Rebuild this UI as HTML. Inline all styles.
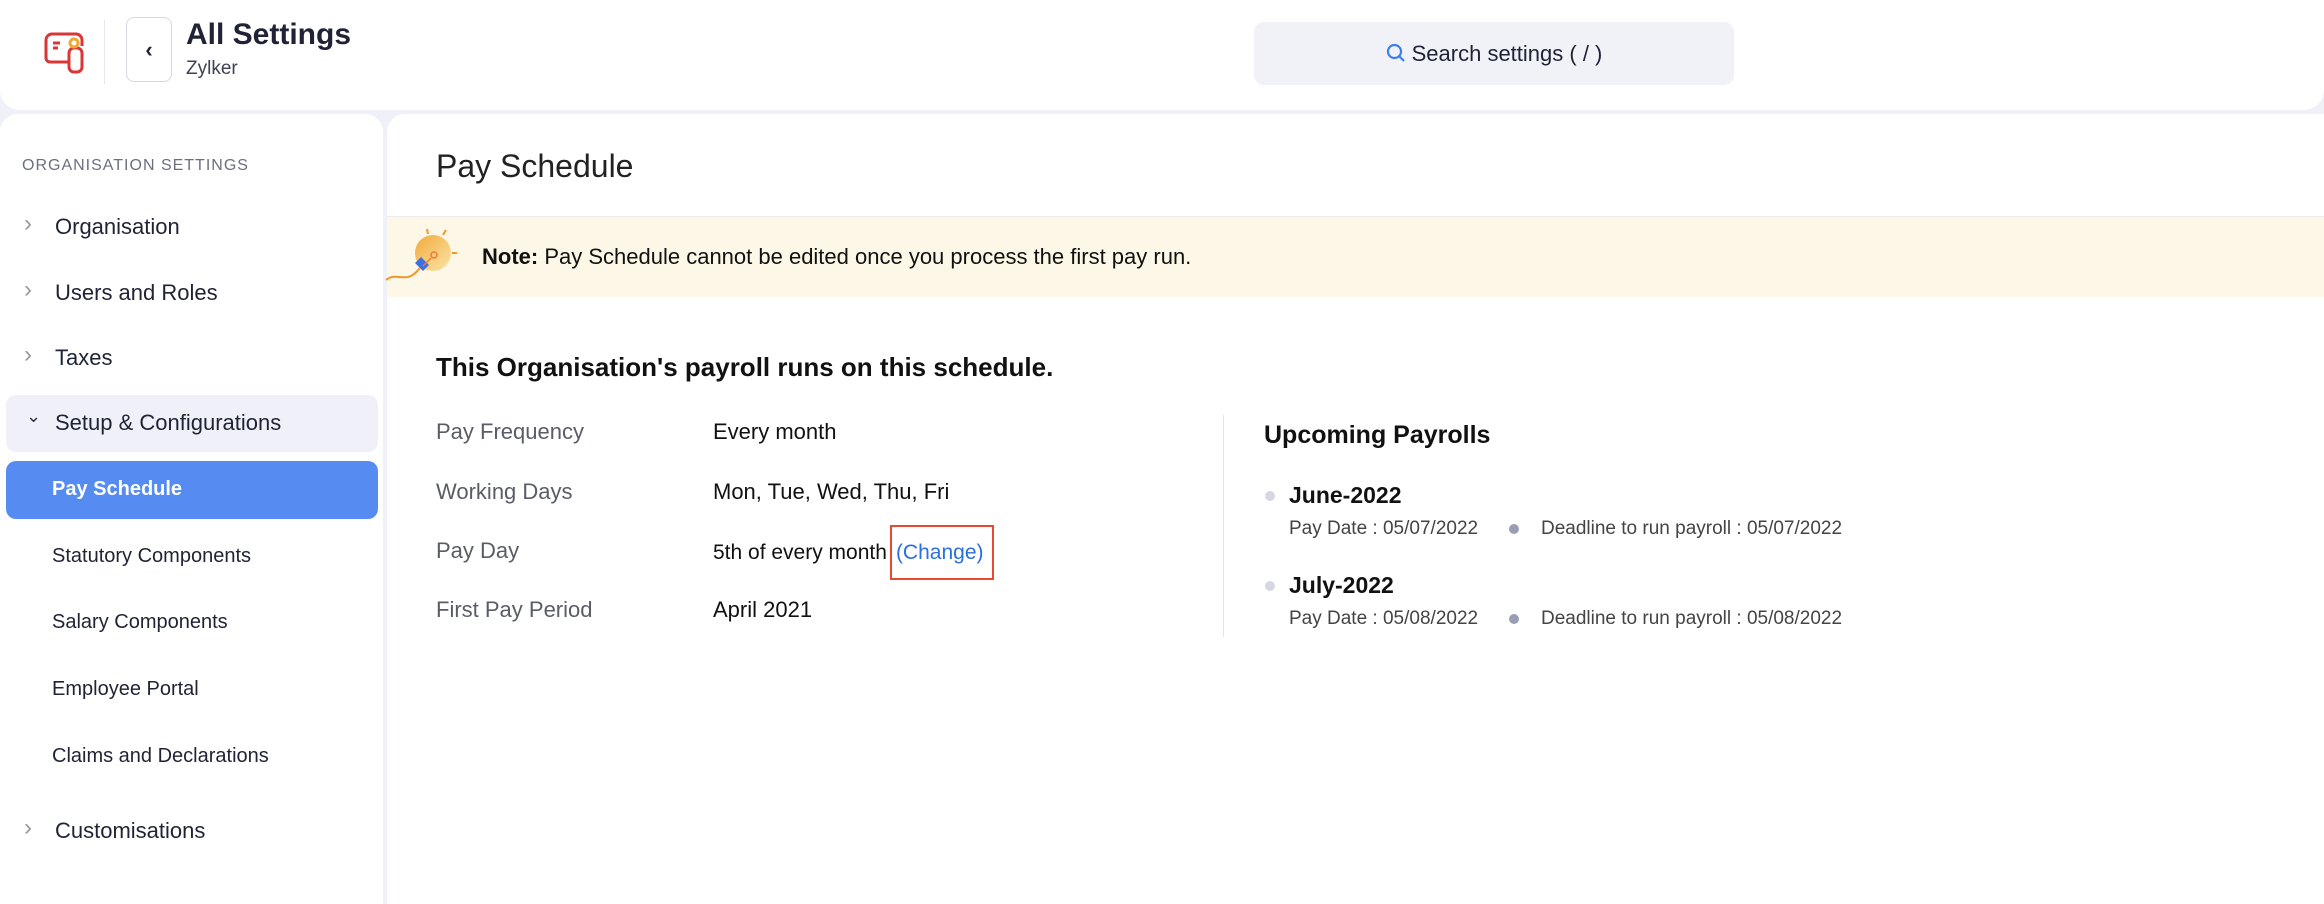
<!DOCTYPE html>
<html><head><meta charset="utf-8"><style>
*{margin:0;padding:0;box-sizing:border-box}
body{width:2324px;height:890px;background:#f0f0f8;font-family:"Liberation Sans",sans-serif;position:relative;overflow:hidden;color:#1f2335}
.a{position:absolute;white-space:nowrap}
.hdr{left:0;top:0;width:2324px;height:110px;background:#fff;border-radius:0 0 20px 20px}
.side{left:0;top:114px;width:383px;height:790px;background:#fff;border-radius:18px 18px 0 0}
.main{left:387px;top:114px;width:1950px;height:790px;background:#fff;border-radius:18px 0 0 0}
.si{font-size:22px;color:#1f2335;left:55px}
.sub{font-size:20px;color:#1f2335;left:52px}
.chev{left:24px;color:#999;font-size:24px}
.lbl{left:436px;font-size:22px;color:#5a5d66}
.val{left:713px;font-size:22px;color:#111}
</style></head><body>
<div class="a hdr"></div>
<svg class="a" style="left:44px;top:32px" width="44" height="42" viewBox="0 0 44 42"><path d="M8 2h24a6 6 0 0 1 6 6v6M2 8a6 6 0 0 1 6-6M2 8v18a4 4 0 0 0 4 4h18" fill="none" stroke="#d93636" stroke-width="3"/><rect x="25" y="16" width="13" height="24" rx="5" fill="none" stroke="#d93636" stroke-width="3"/><path d="M9 11h7M9 16h5" stroke="#d93636" stroke-width="3"/><circle cx="30" cy="11" r="4" fill="none" stroke="#f0a830" stroke-width="3"/></svg>
<div class="a" style="left:104px;top:20px;width:1px;height:64px;background:#e6e6ee"></div>
<div class="a" style="left:126px;top:17px;width:46px;height:65px;border:1px solid #d8d8e2;border-radius:8px;text-align:center;line-height:63px;font-size:22px;font-weight:bold">‹</div>
<div class="a" style="left:186px;top:18px;font-size:30px;font-weight:bold;color:#1f2335">All Settings</div>
<div class="a" style="left:186px;top:58px;font-size:19px;color:#3e4256">Zylker</div>
<div class="a" style="left:1254px;top:22px;width:480px;height:63px;background:#f1f2f8;border-radius:10px;text-align:center;line-height:63px;font-size:22px;color:#1f2335"><svg width="20" height="20" viewBox="0 0 20 20" style="vertical-align:-2px;margin-right:6px"><circle cx="8.5" cy="8.5" r="6.5" fill="none" stroke="#3c7ff0" stroke-width="2.2"/><path d="M13.5 13.5L18 18" stroke="#3c7ff0" stroke-width="2.2"/></svg>Search settings ( / )</div>

<div class="a side"></div>
<div class="a main"></div>
<div class="a" style="left:22px;top:157px;font-size:16px;color:#6b6f80;letter-spacing:1px">ORGANISATION SETTINGS</div>
<div class="a chev" style="top:210px">›</div><div class="a si" style="top:214px">Organisation</div>
<div class="a chev" style="top:276px">›</div><div class="a si" style="top:280px">Users and Roles</div>
<div class="a chev" style="top:341px">›</div><div class="a si" style="top:345px">Taxes</div>
<div class="a" style="left:6px;top:395px;width:372px;height:57px;background:#f0f0f8;border-radius:10px"></div>
<div class="a" style="left:26px;top:406px;font-size:18px;color:#333">⌄</div>
<div class="a si" style="top:410px">Setup &amp; Configurations</div>
<div class="a" style="left:6px;top:461px;width:372px;height:58px;background:#568bf2;border-radius:10px"></div>
<div class="a sub" style="top:478px;color:#fff;font-weight:bold">Pay Schedule</div>
<div class="a sub" style="top:545px">Statutory Components</div>
<div class="a sub" style="top:611px">Salary Components</div>
<div class="a sub" style="top:678px">Employee Portal</div>
<div class="a sub" style="top:745px">Claims and Declarations</div>
<div class="a chev" style="top:814px">›</div><div class="a si" style="top:818px">Customisations</div>

<div class="a" style="left:436px;top:148px;font-size:32px;color:#222">Pay Schedule</div>
<div class="a" style="left:387px;top:216px;width:1937px;height:1px;background:#ececf2"></div>
<div class="a" style="left:387px;top:217px;width:1937px;height:80px;background:#fdf7e7"></div>
<svg class="a" style="left:385px;top:225px" width="80" height="62" viewBox="0 0 80 62"><defs><linearGradient id="g" x1="0" y1="0" x2="1" y2="1"><stop offset="0" stop-color="#f2a93a"/><stop offset="1" stop-color="#fbe6a8"/></linearGradient></defs><circle cx="48" cy="28" r="18" fill="url(#g)"/><path d="M30 38l8 8 6-6-8-8z" fill="#3c6fe0"/><path d="M1 55c10-8 18 2 28-6 3-2 4-4 6-6" fill="none" stroke="#f0962e" stroke-width="2"/><circle cx="49" cy="30" r="3" fill="none" stroke="#f07a3c" stroke-width="1.5"/><path d="M46 33l-8 8" stroke="#f07a3c" stroke-width="1.5"/><path d="M42 4l1 5M58 10l3-5M67 28h5" stroke="#f0962e" stroke-width="2"/></svg>
<div class="a" style="left:482px;top:244px;font-size:22px;color:#111"><b>Note:</b> Pay Schedule cannot be edited once you process the first pay run.</div>

<div class="a" style="left:436px;top:352px;font-size:26px;font-weight:bold;color:#111">This Organisation's payroll runs on this schedule.</div>
<div class="a lbl" style="top:419px">Pay Frequency</div><div class="a val" style="top:419px">Every month</div>
<div class="a lbl" style="top:479px">Working Days</div><div class="a val" style="top:479px">Mon, Tue, Wed, Thu, Fri</div>
<div class="a lbl" style="top:538px">Pay Day</div>
<div class="a val" style="top:525px;line-height:55px;font-size:21px">5th of every month<span style="display:inline-block;margin-left:3px;height:55px;padding:0 8px 0 4px;border:2px solid #e84a2f;color:#2a6fe0;line-height:51px">(Change)</span></div>
<div class="a lbl" style="top:597px">First Pay Period</div><div class="a val" style="top:597px">April 2021</div>
<div class="a" style="left:1223px;top:415px;width:1px;height:222px;background:#e3e3ea"></div>
<div class="a" style="left:1264px;top:421px;font-size:25px;font-weight:bold;color:#111">Upcoming Payrolls</div>
<div class="a" style="left:1265px;top:491px;width:10px;height:10px;border-radius:50%;background:#d6d6e4"></div>
<div class="a" style="left:1289px;top:482px;font-size:23px;font-weight:bold;color:#111">June-2022</div>
<div class="a" style="left:1289px;top:518px;font-size:19px;color:#444">Pay Date : 05/07/2022</div>
<div class="a" style="left:1509px;top:524px;width:10px;height:10px;border-radius:50%;background:#9a9eb5"></div>
<div class="a" style="left:1541px;top:518px;font-size:19px;color:#444">Deadline to run payroll : 05/07/2022</div>
<div class="a" style="left:1265px;top:581px;width:10px;height:10px;border-radius:50%;background:#d6d6e4"></div>
<div class="a" style="left:1289px;top:572px;font-size:23px;font-weight:bold;color:#111">July-2022</div>
<div class="a" style="left:1289px;top:608px;font-size:19px;color:#444">Pay Date : 05/08/2022</div>
<div class="a" style="left:1509px;top:614px;width:10px;height:10px;border-radius:50%;background:#9a9eb5"></div>
<div class="a" style="left:1541px;top:608px;font-size:19px;color:#444">Deadline to run payroll : 05/08/2022</div>
</body></html>
